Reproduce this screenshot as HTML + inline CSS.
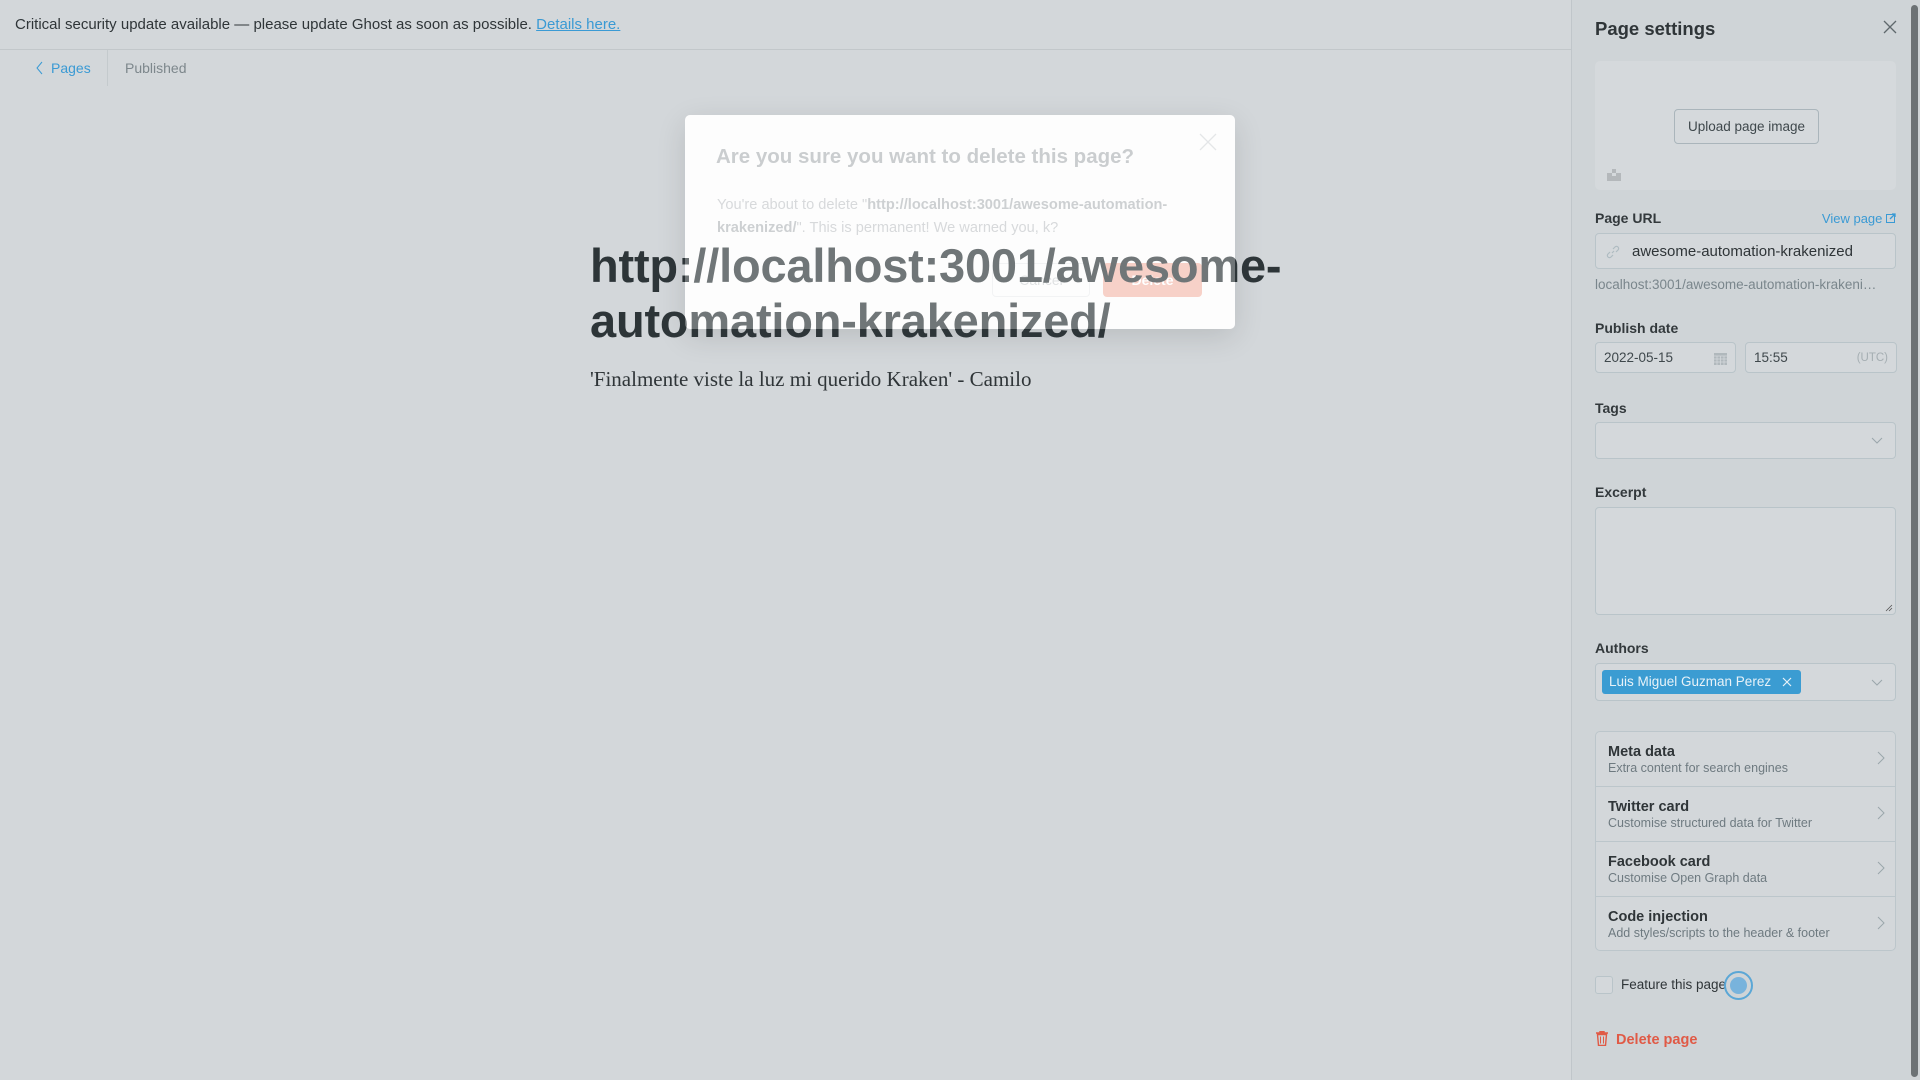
<!DOCTYPE html>
<html><head><meta charset="utf-8">
<style>
*{box-sizing:border-box;margin:0;padding:0}
body{width:1920px;height:1080px;overflow:hidden;background:#d3d7da;font-family:"Liberation Sans",sans-serif;color:#2f3538;position:relative}
.banner{position:absolute;left:0;top:0;width:1571px;height:50px;border-bottom:1px solid #c2c7ca;font-size:15px;line-height:50px;padding-left:15px;color:#2f3538}
.banner a{color:#3a9ad4;text-decoration:underline}
.nav{position:absolute;top:50px;left:0;height:38px;font-size:14px;line-height:36px}
.nav .back{position:absolute;left:35px;color:#3a9ad4;width:72px}
.nav .sep{position:absolute;left:107px;top:0;width:1px;height:36px;background:#c4cacd}
.nav .pub{position:absolute;left:125px;color:#7d878c}
.title{position:absolute;left:590px;top:238px;width:760px;font-size:47px;font-weight:bold;line-height:55px;color:#2d3538;letter-spacing:-0.2px;z-index:3}
.sub{position:absolute;left:590px;top:367px;font-family:"Liberation Serif",serif;font-size:21px;color:#2f3538;z-index:3}
.modal{position:absolute;left:685px;top:115px;width:550px;height:214px;background:#fdfdfd;border-radius:5px;box-shadow:0 8px 30px rgba(0,0,0,.12);z-index:2}
.modalveil{position:absolute;left:685px;top:115px;width:550px;height:214px;background:rgba(255,255,255,.32);border-radius:5px;z-index:4}
.modal h2{position:absolute;left:31px;top:30px;font-size:20.5px;color:#b2b6b9;font-weight:bold}
.modal p{position:absolute;left:32px;top:79px;width:490px;font-size:14.6px;line-height:23px;color:#c4c7ca}
.modal p b{color:#b6babd}
.modal .x{position:absolute;right:18px;top:18px}
.btn-c{position:absolute;left:307px;top:148px;width:98px;height:34px;border:1px solid #eceeef;border-radius:4px;text-align:center;line-height:32px;font-size:14px;color:#d0d3d5}
.btn-d{position:absolute;left:418px;top:148px;width:99px;height:34px;background:#f4bcae;border-radius:4px;text-align:center;line-height:34px;font-size:14px;color:#fff;font-weight:bold}
.side{position:absolute;left:1571px;top:0;width:339px;height:1080px;background:#cfd4d7;border-left:1px solid #c0c6ca}
.scroll{position:absolute;left:1910px;top:0;width:10px;height:1080px;background:#d0d4d7}
.scroll div{position:absolute;left:1px;top:5px;width:7px;height:1072px;background:#6d7275;border-radius:4px}
.s{position:absolute;left:23px}
.lbl{font-size:14px;font-weight:bold;color:#33393c}
.inp{border:1px solid #b9c4c9;border-radius:4px;background:#d4d8db;width:301px}
.row{height:55px;border-bottom:1px solid #bcc6cb;position:relative;padding:12px 0 0 12px}
.row b{display:block;font-size:14.5px;color:#2f3538}
.row span{display:block;font-size:12.5px;color:#6e7a80;margin-top:1px}
.row svg{position:absolute;right:10px;top:19px}
</style></head><body>
<div class="banner">Critical security update available — please update Ghost as soon as possible. <a>Details here.</a></div>
<div class="nav">
 <div class="back"><svg width="10" height="14" style="position:absolute;left:0;top:11px"><path d="M7 1L2 7l5 6" fill="none" stroke="#3a9ad4" stroke-width="1"/></svg><span style="margin-left:16px">Pages</span></div>
 <div class="sep"></div><div class="pub">Published</div>
</div>

<div class="modal">
 <h2>Are you sure you want to delete this page?</h2>
 <p>You're about to delete "<b>http://localhost:3001/awesome-automation-krakenized/</b>". This is permanent! We warned you, k?</p>
 <svg class="x" width="18" height="18"><path d="M1 1L17 17M17 1L1 17" stroke="#d8dbdd" stroke-width="1.3"/></svg>
 <div class="btn-c">Cancel</div><div class="btn-d">Delete</div>
</div>
<div class="title">http://localhost:3001/awesome-automation-krakenized/</div>
<div class="modalveil"></div>
<div class="sub">'Finalmente viste la luz mi querido Kraken' - Camilo</div>

<div class="side">
 <div class="s" style="top:18px;font-size:18.5px;font-weight:bold;color:#2f3538">Page settings</div>
 <svg style="position:absolute;left:311px;top:20px" width="14" height="14"><path d="M1 1L13 13M13 1L1 13" stroke="#5f686d" stroke-width="1.3"/></svg>
 <div class="s" style="top:61px;width:301px;height:129px;background:#d5d9dc;border-radius:5px">
  <div style="position:absolute;left:79px;top:48px;width:145px;height:35px;border:1px solid #aab5bb;border-radius:4px;text-align:center;line-height:33px;font-size:13.5px;color:#3f484c">Upload page image</div>
  <svg style="position:absolute;left:12px;top:108px" width="14" height="12"><rect x="5" y="0" width="4" height="5" fill="#b4b8bb"/><rect x="0" y="4" width="14" height="8" fill="#b4b8bb"/><rect x="5" y="4" width="4" height="3" fill="#d5d9dc"/></svg>
 </div>
 <div class="s lbl" style="top:210px">Page URL</div>
 <div style="position:absolute;right:14px;top:211px;font-size:13px;color:#3a9ad4">View page <svg width="10" height="10"><rect x="0.5" y="1.5" width="8" height="8" fill="none" stroke="#3a9ad4"/><path d="M4 6L9 1M6 1h3v3" stroke="#3a9ad4" fill="none" stroke-width="1.3"/></svg></div>
 <div class="s inp" style="top:233px;height:36px">
  <svg style="position:absolute;left:10px;top:11px" width="14" height="14"><path d="M6 8l2-2M4 7l-2 2a2 2 0 003 3l2-2M10 7l2-2a2 2 0 00-3-3L7 4" fill="none" stroke="#aebbc1" stroke-width="1.2"/></svg>
  <span style="position:absolute;left:36px;top:9px;font-size:15px;color:#2f3538">awesome-automation-krakenized</span>
 </div>
 <div class="s" style="top:277px;font-size:13.5px;color:#7a868c;width:301px;white-space:nowrap;overflow:hidden">localhost:3001/awesome-automation-krakeni…</div>
 <div class="s lbl" style="top:320px">Publish date</div>
 <div class="s inp" style="top:342px;height:31px;width:141px">
  <span style="position:absolute;left:8px;top:7px;font-size:13.5px;color:#3f484c">2022-05-15</span>
  <svg style="position:absolute;right:8px;top:9px" width="13" height="13"><rect x="0" y="1" width="13" height="12" fill="#b0b8bc"/><path d="M0 4h13M0 7h13M0 10h13M3 4v9M6.5 4v9M10 4v9" stroke="#d4d8db" stroke-width=".8"/></svg>
 </div>
 <div class="inp" style="position:absolute;left:173px;top:342px;height:31px;width:152px">
  <span style="position:absolute;left:8px;top:7px;font-size:13.5px;color:#3f484c">15:55</span>
  <span style="position:absolute;right:8px;top:9px;font-size:11.5px;color:#a5aeb2">(UTC)</span>
 </div>
 <div class="s lbl" style="top:400px">Tags</div>
 <div class="s inp" style="top:422px;height:37px">
  <svg style="position:absolute;right:12px;top:14px" width="12" height="8"><path d="M1 1l5 5 5-5" fill="none" stroke="#9aa6ab"/></svg>
 </div>
 <div class="s lbl" style="top:484px">Excerpt</div>
 <div class="s inp" style="top:507px;height:108px">
  <svg style="position:absolute;right:2px;bottom:2px" width="8" height="8"><path d="M7 1L1 7M7 4L4 7" stroke="#555" stroke-width=".8"/></svg>
 </div>
 <div class="s lbl" style="top:640px">Authors</div>
 <div class="s inp" style="top:663px;height:38px">
  <div style="position:absolute;left:6px;top:6px;height:24px;width:199px;background:#3b9cd2;border-radius:3px;color:#e8f2f8;font-size:13.5px;line-height:24px;padding-left:7px">Luis Miguel Guzman Perez<svg style="position:absolute;right:9px;top:7px" width="10" height="10"><path d="M1 1l8 8M9 1L1 9" stroke="#e8f2f8" stroke-width="1.2"/></svg></div>
  <svg style="position:absolute;right:12px;top:15px" width="12" height="8"><path d="M1 1l5 5 5-5" fill="none" stroke="#9aa6ab"/></svg>
 </div>
 <div class="s" style="top:731px;width:301px;height:220px;border:1px solid #bcc6cb;border-radius:5px;background:#d3d7da;overflow:hidden">
  <div class="row"><b>Meta data</b><span>Extra content for search engines</span><svg width="8" height="14"><path d="M1 1l6 6-6 6" fill="none" stroke="#9aa6ab"/></svg></div>
  <div class="row"><b>Twitter card</b><span>Customise structured data for Twitter</span><svg width="8" height="14"><path d="M1 1l6 6-6 6" fill="none" stroke="#9aa6ab"/></svg></div>
  <div class="row"><b>Facebook card</b><span>Customise Open Graph data</span><svg width="8" height="14"><path d="M1 1l6 6-6 6" fill="none" stroke="#9aa6ab"/></svg></div>
  <div class="row" style="border:0"><b>Code injection</b><span>Add styles/scripts to the header &amp; footer</span><svg width="8" height="14"><path d="M1 1l6 6-6 6" fill="none" stroke="#9aa6ab"/></svg></div>
 </div>
 <div class="s" style="top:976px;width:18px;height:18px;border:1px solid #b9c4c9;border-radius:3px;background:#d4d8db"></div>
 <div class="s" style="left:49px;top:977px;font-size:13.5px;color:#2f3538">Feature this page</div>
 <div style="position:absolute;left:152px;top:971px;width:29px;height:29px;border-radius:50%;border:2px solid #5ba7d6"><div style="position:absolute;left:4px;top:4px;width:17px;height:17px;border-radius:50%;background:#78b3dc"></div></div>
 <svg class="s" style="top:1031px" width="14" height="15"><path d="M1 2h12M5 2V0.5h4V2M2.5 3.5h9l-1 11h-7z" fill="none" stroke="#e05a46" stroke-width="1.4"/><path d="M5.5 5.5v7M8.5 5.5v7" stroke="#e05a46"/></svg>
 <div class="s" style="left:44px;top:1032px;font-size:14.5px;color:#e05a46;font-weight:bold">Delete page</div>
</div>
<div class="scroll"><div></div></div>
</body></html>
